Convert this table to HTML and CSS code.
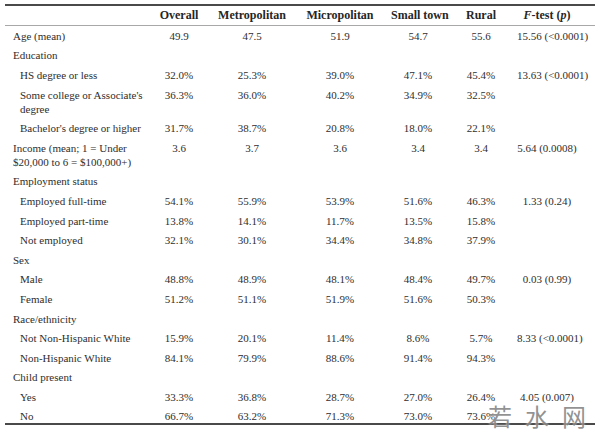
FILE: index.html
```html
<!DOCTYPE html>
<html lang="en">
<head>
<meta charset="utf-8">
<title>Respondent characteristics by area</title>
<link rel="stylesheet" href="styles.css">
</head>
<body>
<div class="page">
  <table class="data">
    <colgroup>
      <col class="c-label">
      <col class="c-overall">
      <col class="c-metro">
      <col class="c-micro">
      <col class="c-small">
      <col class="c-rural">
      <col class="c-f">
    </colgroup>
    <thead>
      <tr>
        <th class="label"></th>
        <th>Overall</th>
        <th>Metropolitan</th>
        <th>Micropolitan</th>
        <th>Small town</th>
        <th>Rural</th>
        <th class="ftest"><i>F</i>-test (<i>p</i>)</th>
      </tr>
    </thead>
    <tbody>
      <tr><td class="label">Age (mean)</td><td>49.9</td><td>47.5</td><td>51.9</td><td>54.7</td><td>55.6</td><td class="ftest">15.56 (&lt;0.0001)</td></tr>
      <tr><td class="label">Education</td><td></td><td></td><td></td><td></td><td></td><td class="ftest"></td></tr>
      <tr><td class="label sub">HS degree or less</td><td>32.0%</td><td>25.3%</td><td>39.0%</td><td>47.1%</td><td>45.4%</td><td class="ftest">13.63 (&lt;0.0001)</td></tr>
      <tr><td class="label sub">Some college or Associate's degree</td><td>36.3%</td><td>36.0%</td><td>40.2%</td><td>34.9%</td><td>32.5%</td><td class="ftest"></td></tr>
      <tr><td class="label sub">Bachelor's degree or higher</td><td>31.7%</td><td>38.7%</td><td>20.8%</td><td>18.0%</td><td>22.1%</td><td class="ftest"></td></tr>
      <tr><td class="label">Income (mean; 1 = Under $20,000 to 6 = $100,000+)</td><td>3.6</td><td>3.7</td><td>3.6</td><td>3.4</td><td>3.4</td><td class="ftest">5.64 (0.0008)</td></tr>
      <tr><td class="label">Employment status</td><td></td><td></td><td></td><td></td><td></td><td class="ftest"></td></tr>
      <tr><td class="label sub">Employed full-time</td><td>54.1%</td><td>55.9%</td><td>53.9%</td><td>51.6%</td><td>46.3%</td><td class="ftest">1.33 (0.24)</td></tr>
      <tr><td class="label sub">Employed part-time</td><td>13.8%</td><td>14.1%</td><td>11.7%</td><td>13.5%</td><td>15.8%</td><td class="ftest"></td></tr>
      <tr><td class="label sub">Not employed</td><td>32.1%</td><td>30.1%</td><td>34.4%</td><td>34.8%</td><td>37.9%</td><td class="ftest"></td></tr>
      <tr><td class="label">Sex</td><td></td><td></td><td></td><td></td><td></td><td class="ftest"></td></tr>
      <tr><td class="label sub">Male</td><td>48.8%</td><td>48.9%</td><td>48.1%</td><td>48.4%</td><td>49.7%</td><td class="ftest">0.03 (0.99)</td></tr>
      <tr><td class="label sub">Female</td><td>51.2%</td><td>51.1%</td><td>51.9%</td><td>51.6%</td><td>50.3%</td><td class="ftest"></td></tr>
      <tr><td class="label">Race/ethnicity</td><td></td><td></td><td></td><td></td><td></td><td class="ftest"></td></tr>
      <tr><td class="label sub">Not Non-Hispanic White</td><td>15.9%</td><td>20.1%</td><td>11.4%</td><td>8.6%</td><td>5.7%</td><td class="ftest">8.33 (&lt;0.0001)</td></tr>
      <tr><td class="label sub">Non-Hispanic White</td><td>84.1%</td><td>79.9%</td><td>88.6%</td><td>91.4%</td><td>94.3%</td><td class="ftest"></td></tr>
      <tr><td class="label">Child present</td><td></td><td></td><td></td><td></td><td></td><td class="ftest"></td></tr>
      <tr><td class="label sub">Yes</td><td>33.3%</td><td>36.8%</td><td>28.7%</td><td>27.0%</td><td>26.4%</td><td class="ftest">4.05 (0.007)</td></tr>
      <tr class="last"><td class="label sub">No</td><td>66.7%</td><td>63.2%</td><td>71.3%</td><td>73.0%</td><td>73.6%</td><td class="ftest"></td></tr>
    </tbody>
  </table>
  <div class="watermark">若水网</div>
</div>
</body>
</html>
```

FILE: styles.css
```css
html, body {
  margin: 0;
  padding: 0;
  background: #ffffff;
}

body {
  font-family: "Liberation Serif", "Times New Roman", serif;
  font-size: 11px;
  color: #2e2e2e;
}

.page {
  position: relative;
  padding: 4px 5px 0 5px;
  width: 590px;
  height: 432px;
}

.data {
  width: 590px;
  table-layout: fixed;
  border-collapse: collapse;
  border-top: 2px solid #4a4a4a;
  border-bottom: 2px solid #4a4a4a;
}

.c-label { width: 138px; }
.c-overall { width: 72px; }
.c-metro { width: 74px; }
.c-micro { width: 102px; }
.c-small { width: 54px; }
.c-rural { width: 72px; }
.c-f { width: 78px; }

.data th {
  font-size: 12px;
  font-weight: bold;
  color: #262626;
  line-height: 14px;
  padding: 2px 0 3px 0;
  text-align: center;
  white-space: nowrap;
  border-bottom: 1px solid #a8a8a8;
}

.data td {
  line-height: 14px;
  padding: 2.8px 0 2.8px 0;
  text-align: center;
  vertical-align: top;
  white-space: nowrap;
}

.data td.label,
.data th.label {
  text-align: left;
  padding-left: 8px;
  white-space: normal;
}

.data td.sub {
  padding-left: 15px;
}

.data .ftest {
  padding-right: 18px;
}

.data tr.last td {
  padding-bottom: 0;
}

.watermark {
  position: absolute;
  left: 488px;
  top: 403px;
  font-family: "Noto Sans CJK SC", sans-serif;
  font-size: 24px;
  line-height: 26px;
  letter-spacing: 13px;
  color: rgba(110, 110, 110, 0.75);
  text-shadow: 0 0 2px rgba(255, 255, 255, 0.9);
  white-space: nowrap;
}
```
